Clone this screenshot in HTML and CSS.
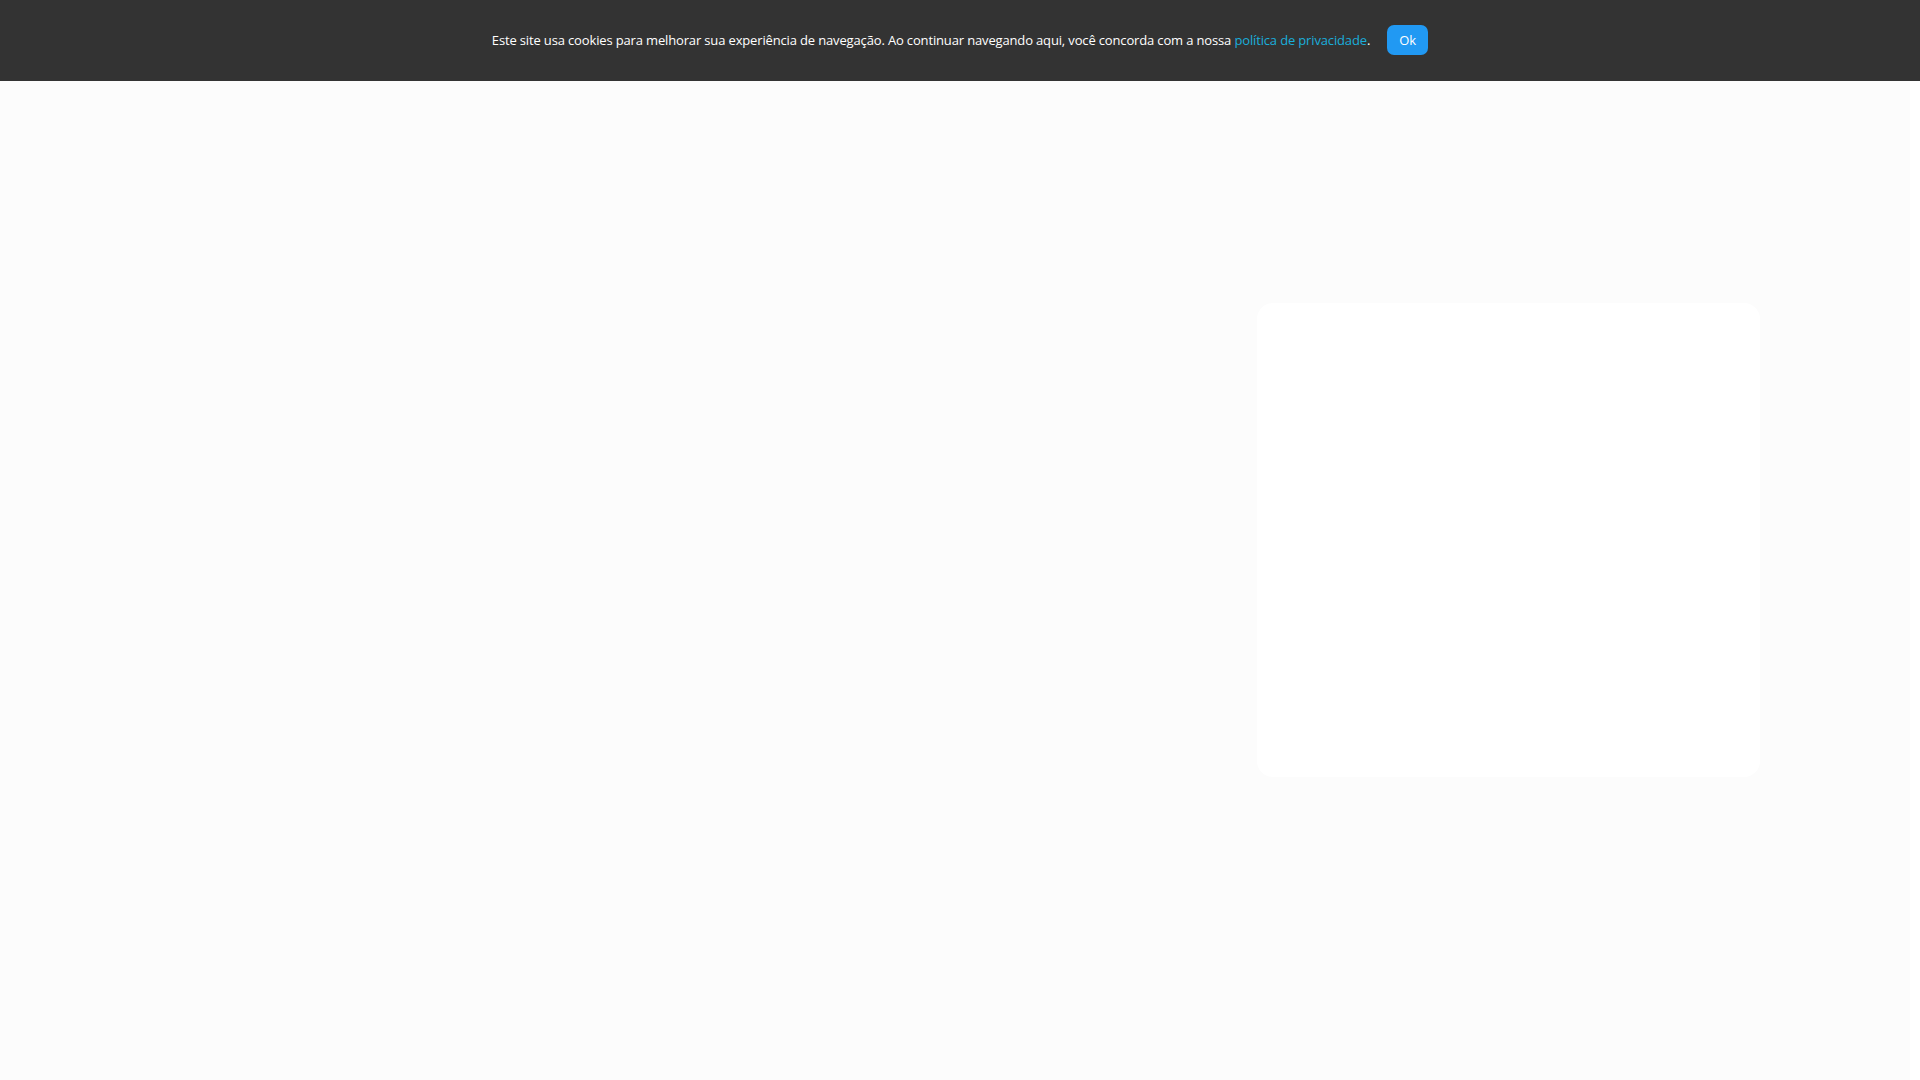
FILE: index.html
```html
<!DOCTYPE html>
<html lang="pt-BR">
<head>
<meta charset="utf-8">
<title>Cookies</title>
<link rel="stylesheet" href="styles.css">
</head>
<body>
<div class="cookie-bar">
  <p class="cookie-text">Este site usa cookies para melhorar sua experiência de navegação. Ao continuar navegando aqui, você concorda com a nossa <a href="#" class="cookie-link">política de privacidade</a>.</p>
  <button class="cookie-btn">Ok</button>
</div>
<div class="page">
  <div class="card"></div>
</div>
</body>
</html>
```
FILE: styles.css
```css
html, body {
  margin: 0;
  padding: 0;
  height: 100%;
  background: #ffffff;
  font-family: "Open Sans", "Liberation Sans", sans-serif;
}
.cookie-bar {
  height: 81px;
  box-sizing: border-box;
  padding-bottom: 2px;
  background: #333333;
  display: flex;
  align-items: center;
  justify-content: center;
  gap: 17px;
}
.cookie-text {
  margin: 0;
  color: #ffffff;
  font-size: 13px;
  letter-spacing: -0.15px;
}
.cookie-link {
  color: #1aaedb;
  text-decoration: none;
}
.cookie-btn {
  background: #2199f3;
  color: #ffffff;
  border: none;
  border-radius: 7px;
  width: 41px;
  height: 30px;
  font-family: "Open Sans", "Liberation Sans", sans-serif;
  font-size: 13px;
  padding: 0;
}
.page {
  margin-right: 10px;
  height: calc(100% - 81px);
  background: #fcfcfc;
  padding: 222px 0 0 1257px;
  box-sizing: border-box;
}
.card {
  width: 503px;
  height: 474px;
  background: #ffffff;
  border-radius: 16px;
}
```
